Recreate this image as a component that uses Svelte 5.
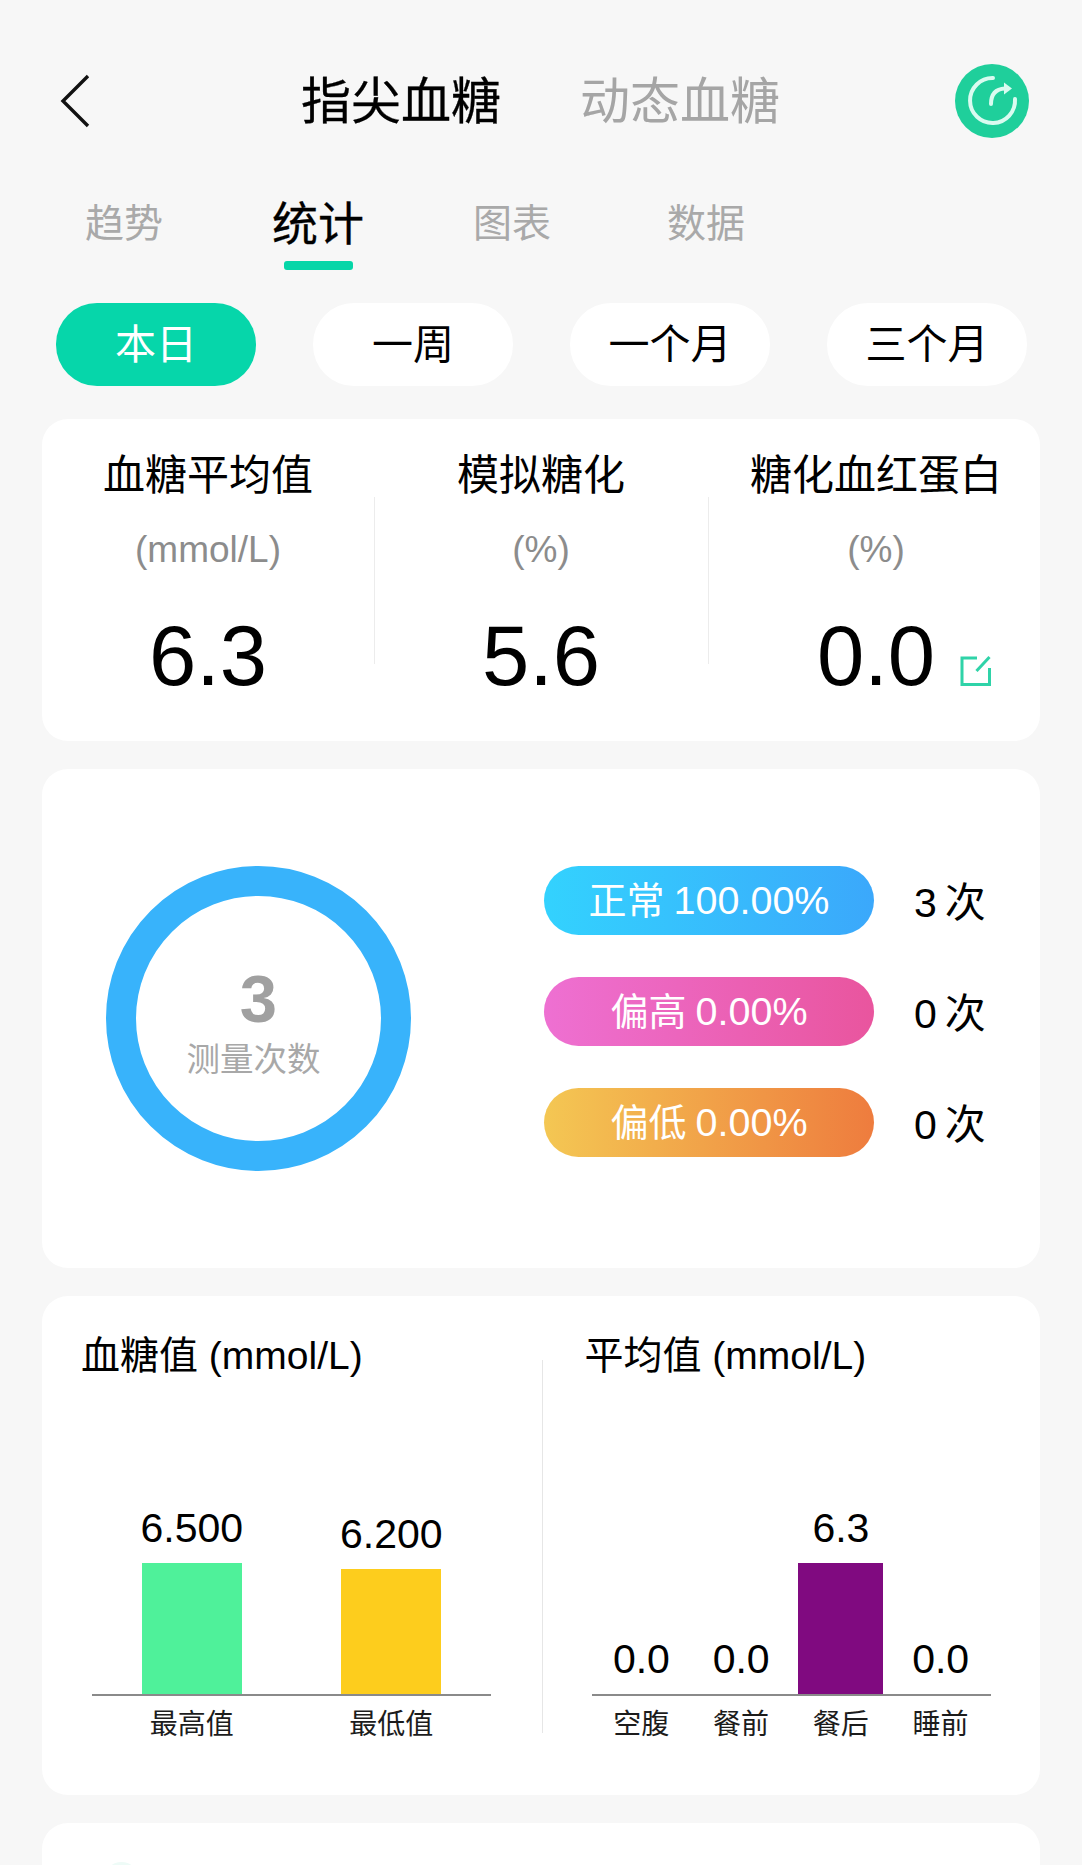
<script>
  let tabs = ["趋势", "统计", "图表", "数据"];
  let ranges = ["本日", "一周", "一个月", "三个月"];
  let summary = [
    { title: "血糖平均值", unit: "(mmol/L)", value: "6.3" },
    { title: "模拟糖化", unit: "(%)", value: "5.6" },
    { title: "糖化血红蛋白", unit: "(%)", value: "0.0", editable: true },
  ];
  let levels = [
    { cls: "normal", label: "正常", pct: "100.00%", count: 3 },
    { cls: "high", label: "偏高", pct: "0.00%", count: 0 },
    { cls: "low", label: "偏低", pct: "0.00%", count: 0 },
  ];
  let charts = [
    {
      title: "血糖值",
      wide: true,
      bars: [
        { label: "最高值", value: "6.500", h: 131, color: "#4ff19a" },
        { label: "最低值", value: "6.200", h: 125, color: "#fdcd1d" },
      ],
    },
    {
      title: "平均值",
      bars: [
        { label: "空腹", value: "0.0", h: 0, color: "#800a80" },
        { label: "餐前", value: "0.0", h: 0, color: "#800a80" },
        { label: "餐后", value: "6.3", h: 131, color: "#800a80" },
        { label: "睡前", value: "0.0", h: 0, color: "#800a80" },
      ],
    },
  ];
</script>

<div class="page">
  <header>
    <svg class="back" width="30" height="54" viewBox="0 0 30 54">
      <path d="M28 2 L3 27 L28 52" fill="none" stroke="#111" stroke-width="3.4" />
    </svg>
    <strong class="title on">指尖血糖</strong>
    <span class="title">动态血糖</span>
    <svg class="refresh" width="74" height="74" viewBox="0 0 74 74">
      <circle cx="37" cy="37" r="37" fill="#1fcf9b" />
      <path d="M38 14 A22.5 22.5 0 1 0 60 35" fill="none" stroke="#d9fbf0" stroke-width="4" stroke-linecap="round" />
      <path d="M36 40 C36 31 40 25 50 24.5" fill="none" stroke="#d9fbf0" stroke-width="4" stroke-linecap="round" />
      <path d="M49 18.5 L57 24.5 L49 30.5 Z" fill="#d9fbf0" />
    </svg>
  </header>

  <nav class="tabs">
    {#each tabs as tab, i}
      <div class="tab" class:active={i === 1}>{tab}</div>
    {/each}
  </nav>

  <div class="ranges">
    {#each ranges as range, i}
      <div class="range" class:active={i === 0}>{range}</div>
    {/each}
  </div>

  <section class="card summary">
    {#each summary as item}
      <div class="cell">
        <div class="cell-title">{item.title}</div>
        <div class="cell-unit">{item.unit}</div>
        <div class="cell-value">
          {item.value}
          {#if item.editable}
            <svg class="edit" width="32" height="32" viewBox="0 0 32 32">
              <path d="M17 3 H2 V29.5 H29.5 V13" fill="none" stroke="#2fd3a8" stroke-width="3" />
              <path d="M16.5 16 L29.5 2" fill="none" stroke="#2fd3a8" stroke-width="3" />
            </svg>
          {/if}
        </div>
      </div>
    {/each}
  </section>

  <section class="card counts">
    <div class="ring">
      <b>3</b>
      <span>测量次数</span>
    </div>
    <div class="levels">
      {#each levels as level}
        <div class="level">
          <div class="pill {level.cls}">{level.label}<span>{level.pct}</span></div>
          <div class="count">{level.count}<span>次</span></div>
        </div>
      {/each}
    </div>
  </section>

  <section class="card charts">
    {#each charts as chart}
      <div class="panel" class:wide={chart.wide}>
        <h3>{chart.title} <span>(mmol/L)</span></h3>
        <div class="plot">
          {#each chart.bars as bar}
            <div class="col">
              <div class="val">{bar.value}</div>
              <div class="bar" style="height:{bar.h}px;background:{bar.color}"></div>
            </div>
          {/each}
        </div>
        <div class="labels">
          {#each chart.bars as bar}
            <div class="col-label">{bar.label}</div>
          {/each}
        </div>
      </div>
    {/each}
  </section>

  <section class="card last">
    <div class="peek"></div>
  </section>
</div>

<style>
  :global(body) {
    margin: 0;
    background: #f7f7f7;
  }
  .page {
    height: 1865px;
    overflow: hidden;
    background: #f7f7f7;
    font-family: "Liberation Sans", "Noto Sans CJK SC", sans-serif;
    color: #000;
  }
  header {
    display: flex;
    align-items: center;
    height: 74px;
    padding: 64px 53px 0 60px;
  }
  .back {
    margin-right: 211px;
  }
  .title {
    margin: 0 79px 9px 0;
    font-size: 50px;
    font-weight: 400;
    color: #a5a5a5;
    white-space: nowrap;
  }
  .title.on {
    color: #000;
    -webkit-text-stroke: 0.3px #000;
  }
  .refresh {
    margin-left: auto;
  }
  .tabs {
    display: flex;
    height: 75px;
    margin-top: 59px;
    padding-left: 27px;
  }
  .tab {
    position: relative;
    width: 194px;
    text-align: center;
    font-size: 39px;
    line-height: 54px;
    color: #a9a9a9;
  }
  .tab.active {
    font-size: 46px;
    color: #000;
    -webkit-text-stroke: 0.3px #000;
  }
  .tab.active::after {
    content: "";
    position: absolute;
    left: 63px;
    bottom: 2px;
    width: 69px;
    height: 9px;
    border-radius: 3px;
    background: #06d6a8;
  }
  .ranges {
    display: flex;
    gap: 57px;
    margin-top: 31px;
    padding-left: 56px;
  }
  .range {
    width: 200px;
    height: 83px;
    line-height: 84px;
    border-radius: 41px;
    background: #fff;
    text-align: center;
    font-size: 41px;
  }
  .range.active {
    background: #06d6aa;
    color: #fff;
  }
  .card {
    width: 998px;
    margin: 28px 0 0 42px;
    border-radius: 26px;
    background: #fff;
  }
  .summary {
    display: grid;
    grid-template-columns: 332px 334px 332px;
    height: 322px;
    margin-top: 33px;
  }
  .cell {
    position: relative;
    text-align: center;
  }
  .cell + .cell::before {
    content: "";
    position: absolute;
    left: 0;
    top: 78px;
    width: 1px;
    height: 167px;
    background: #ececec;
  }
  .cell:last-child {
    padding-left: 4px;
  }
  .cell-title {
    margin-top: 33px;
    font-size: 42px;
    line-height: 48px;
    white-space: nowrap;
  }
  .cell-unit {
    margin-top: 26px;
    font-size: 37px;
    line-height: 48px;
    color: #8c8c8c;
  }
  .cell-value {
    position: relative;
    margin-top: 34px;
    font-size: 85px;
    line-height: 96px;
  }
  .edit {
    position: absolute;
    left: 248px;
    top: 47px;
  }
  .counts {
    display: flex;
    align-items: center;
    height: 499px;
    padding-left: 64px;
    box-sizing: border-box;
  }
  .ring {
    display: flex;
    flex-direction: column;
    align-items: center;
    justify-content: center;
    box-sizing: border-box;
    width: 305px;
    height: 305px;
    padding-top: 8px;
    border: 30px solid #38b3fb;
    border-radius: 50%;
  }
  .ring b {
    font-size: 67px;
    line-height: 68px;
    color: #a0a0a0;
  }
  .ring span {
    margin-top: 6px;
    margin-right: 10px;
    font-size: 33.5px;
    line-height: 42px;
    color: #a8a8a8;
  }
  .levels {
    display: flex;
    flex-direction: column;
    gap: 42px;
    margin: 0 0 14px 133px;
  }
  .level {
    display: flex;
    align-items: center;
  }
  .pill {
    width: 330px;
    height: 69px;
    line-height: 69px;
    border-radius: 35px;
    text-align: center;
    font-size: 38px;
    color: #fff;
  }
  .pill span {
    margin-left: 9px;
    font-size: 39.5px;
  }
  .normal {
    background: linear-gradient(90deg, #33d2fe, #3ba8fb);
  }
  .high {
    background: linear-gradient(90deg, #ee70d2, #e9559e);
  }
  .low {
    background: linear-gradient(90deg, #f4c753, #ee7c3e);
  }
  .count {
    margin: 0 0 4px 40px;
    font-size: 41px;
  }
  .count span {
    margin-left: 8px;
  }
  .charts {
    display: flex;
    height: 499px;
  }
  .panel {
    width: 498px;
    padding-left: 49px;
    box-sizing: border-box;
  }
  .panel.wide {
    position: relative;
    width: 501px;
    padding-left: 50px;
  }
  .panel.wide::after {
    content: "";
    position: absolute;
    right: 0;
    top: 64px;
    width: 1px;
    height: 373px;
    background: #e6e6e6;
  }
  h3 {
    margin: 33px 0 0 -7px;
    font-size: 39px;
    font-weight: 400;
    line-height: 54px;
    white-space: nowrap;
  }
  .wide h3 {
    margin-left: -11px;
  }
  .plot {
    display: flex;
    align-items: flex-end;
    width: 399px;
    height: 311px;
    border-bottom: 2px solid #8a8a8a;
  }
  .col {
    flex: 1;
    display: flex;
    flex-direction: column;
    align-items: center;
  }
  .val {
    margin-bottom: 13px;
    font-size: 41px;
    line-height: 44px;
  }
  .bar {
    width: 100px;
  }
  .panel:not(.wide) .bar {
    width: 85px;
  }
  .labels {
    display: flex;
    width: 399px;
    margin-top: 10px;
  }
  .col-label {
    flex: 1;
    text-align: center;
    font-size: 28px;
    line-height: 38px;
    color: #1c1c1c;
  }
  .last {
    height: 200px;
    overflow: hidden;
  }
  .peek {
    width: 35px;
    height: 35px;
    margin: 39px 0 0 62px;
    border-radius: 50%;
    background: #eefbf7;
  }
</style>
